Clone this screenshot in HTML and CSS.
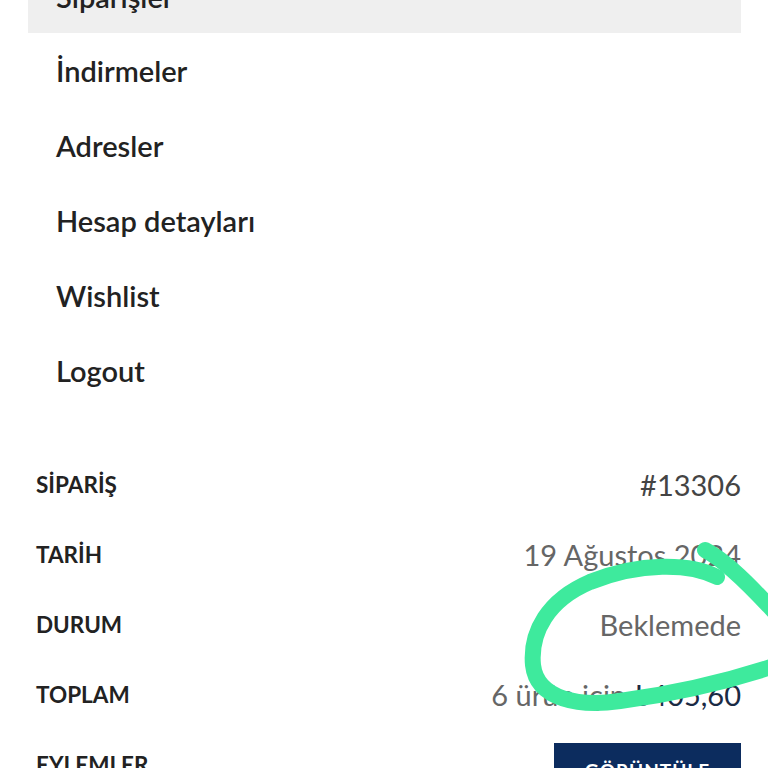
FILE: index.html
```html
<!DOCTYPE html>
<html lang="tr">
<head>
<meta charset="utf-8">
<link rel="stylesheet" href="styles.css">
</head>
<body>
<div class="page">
  <nav class="menu">
    <a class="item active">Siparişler</a>
    <a class="item">İndirmeler</a>
    <a class="item">Adresler</a>
    <a class="item">Hesap detayları</a>
    <a class="item">Wishlist</a>
    <a class="item">Logout</a>
  </nav>
  <div class="order">
    <div class="row"><span class="label">SİPARİŞ</span><span class="value dark">#13306</span></div>
    <div class="row"><span class="label">TARİH</span><span class="value">19 Ağustos 2024</span></div>
    <div class="row"><span class="label">DURUM</span><span class="value">Beklemede</span></div>
    <div class="row"><span class="label">TOPLAM</span><span class="value">6 ürün için <span class="amount">₺405,60</span></span></div>
    <div class="row"><span class="label">EYLEMLER</span><span class="btn">GÖRÜNTÜLE</span></div>
  </div>
</div>
<svg class="scribble" width="768" height="768" viewBox="0 0 768 768">
  <path d="M717,577 C690,563 640,562 590,582 C548,600 530,632 533,665 C537,700 580,707 620,701 C680,693 730,681 780,664" />
  <path d="M705,550 C725,560 750,585 780,618" />
</svg>
</body>
</html>
```
FILE: styles.css
```css
html, body {
  margin: 0;
  padding: 0;
  background: #ffffff;
  overflow: hidden;
}
body {
  width: 768px;
  height: 768px;
  position: relative;
  font-family: Lato, "Liberation Sans", sans-serif;
  color: #222222;
}
.page {
  margin-left: 28px;
  width: 713px;
  margin-top: -41px;
}
.menu {
  display: flex;
  flex-direction: column;
}
.item {
  height: 75px;
  display: flex;
  align-items: center;
  padding-left: 28px;
  font-size: 29px;
  font-weight: 600;
  color: #222222;
}
.item.active {
  background: #efefef;
  height: 74px;
}
.order {
  margin-top: 41px;
  display: flex;
  flex-direction: column;
}
.row {
  height: 70px;
  display: flex;
  align-items: center;
  justify-content: space-between;
  padding-left: 8px;
}
.label {
  font-size: 22.5px;
  font-weight: 700;
  color: #222222;
}
.value {
  font-size: 29px;
  font-weight: 400;
  color: #666666;
}
.value.dark {
  color: #444444;
}
.amount {
  color: #1b2a44;
}
.btn {
  box-sizing: border-box;
  width: 187px;
  height: 60px;
  align-self: flex-start;
  margin-top: 14px;
  padding-top: 16px;
  background: #0c2c5e;
  color: #ffffff;
  font-size: 19px;
  font-weight: 700;
  display: flex;
  align-items: flex-start;
  justify-content: center;
  letter-spacing: 1px;
}
.scribble {
  position: absolute;
  left: 0;
  top: 0;
  pointer-events: none;
}
.scribble path {
  fill: none;
  stroke: #3eea9d;
  stroke-width: 16;
  stroke-linecap: round;
  stroke-linejoin: round;
}
```
